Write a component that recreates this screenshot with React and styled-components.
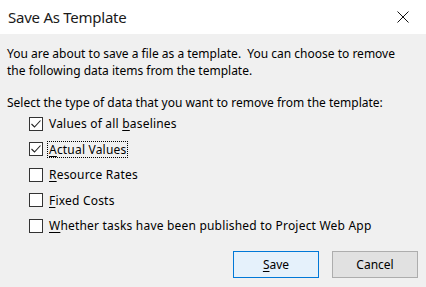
import { useState } from "react";
import styled, { createGlobalStyle } from "styled-components";

const GlobalStyle = createGlobalStyle`
    html, body { margin: 0; padding: 0; background: #f0f0f0; }
    * { box-sizing: border-box; }
`;

const items = [
    { label: "Values of all baselines", key: 14, checked: true },
    { label: "Actual Values", key: 0, checked: true, focused: true },
    { label: "Resource Rates", key: 0, checked: false },
    { label: "Fixed Costs", key: 0, checked: false },
    { label: "Whether tasks have been published to Project Web App", key: 0, checked: false },
];

const Dialog = styled.div`
    width: 426px;
    height: 287px;
    display: flex;
    flex-direction: column;
    background: #f0f0f0;
    font-family: "Noto Sans", "Open Sans", sans-serif;
    color: #000;
`;

const TitleBar = styled.div`
    height: 34px;
    flex: none;
    display: flex;
    align-items: center;
    justify-content: space-between;
    background: #fff;
    padding: 0 0 0 8px;
`;

const Title = styled.span`
    font-size: 15px;
    color: #1a1a1a;
    letter-spacing: -0.25px;
`;

const CloseButton = styled.button`
    width: 46px;
    height: 34px;
    border: none;
    background: transparent;
    display: flex;
    align-items: center;
    justify-content: center;
    padding: 0;
`;

const Body = styled.div`
    flex: 1;
    display: flex;
    flex-direction: column;
    padding: 11px 8px 0 7px;
    font-size: 12px;
    line-height: 17px;
`;

const Paragraph = styled.p`
    margin: 0 0 ${p => (p.$last ? 0 : 15)}px 0;
`;

const List = styled.div`
    display: flex;
    flex-direction: column;
    gap: 8.5px;
    padding: 4px 0 0 22px;
`;

const Row = styled.label`
    display: flex;
    align-items: center;
    height: 17px;
`;

const Box = styled.span`
    width: 14px;
    height: 14px;
    flex: none;
    border: 1px solid #333;
    background: #fff;
    display: flex;
    align-items: center;
    justify-content: center;
    margin-right: 5px;
`;

const Label = styled.span`
    padding: 0 1px;
    outline: ${p => (p.$focused ? "1px dotted #000" : "none")};
    line-height: 15px;
    letter-spacing: 0.2px;
`;

const Key = styled.u`
    text-decoration-thickness: 1px;
    text-underline-offset: 2px;
`;

const Footer = styled.div`
    margin-top: auto;
    display: flex;
    justify-content: flex-end;
    gap: 13px;
    padding-bottom: 9px;
`;

const Button = styled.button`
    width: 86px;
    height: 27px;
    font-family: inherit;
    font-size: 12px;
    color: #000;
    border: 1px solid ${p => (p.$primary ? "#0078d7" : "#adadad")};
    background: ${p => (p.$primary ? "#e5f1fb" : "#e1e1e1")};
    padding: 0;
`;

function Check() {
    return (
        <svg width="12" height="12" viewBox="0 0 12 12">
            <polyline points="1.5,6 4.5,9 10.5,2.5" fill="none" stroke="#222" strokeWidth="1.1" />
        </svg>
    );
}

function Accel({ text, at }) {
    return (
        <>
            {text.slice(0, at)}
            <Key>{text[at]}</Key>
            {text.slice(at + 1)}
        </>
    );
}

export default function App() {
    const [state, setState] = useState(items.map(i => i.checked));

    return (
        <>
            <GlobalStyle />
            <Dialog>
                <TitleBar>
                    <Title>Save As Template</Title>
                    <CloseButton aria-label="Close">
                        <svg width="12" height="12" viewBox="0 0 12 12">
                            <path d="M0.5 0.5 L11.5 11.5 M11.5 0.5 L0.5 11.5" stroke="#111" strokeWidth="1" />
                        </svg>
                    </CloseButton>
                </TitleBar>
                <Body>
                    <Paragraph>
                        You are about to save a file as a template.&nbsp; You can choose to remove<br />
                        the following data items from the template.
                    </Paragraph>
                    <Paragraph $last>
                        Select the type of data that you want to remove from the template:
                    </Paragraph>
                    <List>
                        {items.map((it, i) => (
                            <Row key={it.label} onClick={() => setState(s => s.map((v, j) => (j === i ? !v : v)))}>
                                <Box>{state[i] && <Check />}</Box>
                                <Label $focused={it.focused}>
                                    <Accel text={it.label} at={it.key} />
                                </Label>
                            </Row>
                        ))}
                    </List>
                    <Footer>
                        <Button $primary><Key>S</Key>ave</Button>
                        <Button>Cancel</Button>
                    </Footer>
                </Body>
            </Dialog>
        </>
    );
}
